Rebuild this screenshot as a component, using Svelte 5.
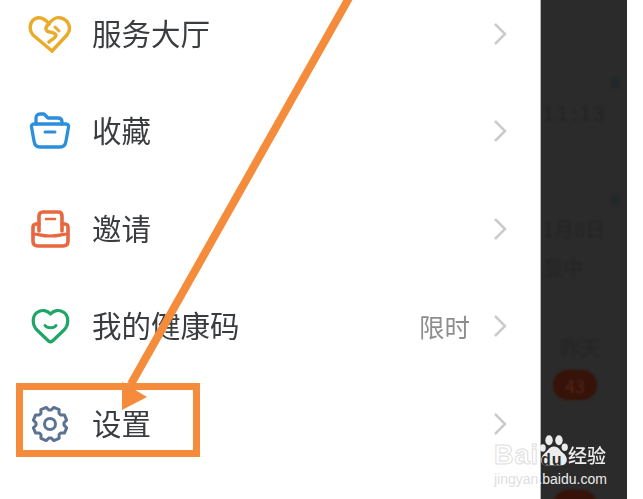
<script>
  const rows = [
    { label: "服务大厅", icon: "heart" },
    { label: "收藏", icon: "folder" },
    { label: "邀请", icon: "inbox" },
    { label: "我的健康码", icon: "health", note: "限时" },
    { label: "设置", icon: "gear" },
  ];

  // 8 teeth, outer and inner radius alternate
  function gearPath() {
    const pts = [];
    for (let i = 0; i < 8; i++) {
      const a = (i * Math.PI) / 4 + Math.PI / 8;
      const spread = [-0.17, 0.17, 0.31, 0.47];
      pts.push([a + spread[0], 17], [a + spread[1], 17], [a + spread[2], 14], [a + spread[3], 14]);
    }
    const xy = pts.map(([t, r]) => `${(22 + r * Math.cos(t)).toFixed(1)} ${(22 + r * Math.sin(t)).toFixed(1)}`);
    return "M" + xy.join(" L") + " Z";
  }
  const gear = gearPath();
</script>

<div class="page">
  <div class="drawer">
    <ul class="menu">
      {#each rows as row}
        <li class="row">
          <svg class="icon" viewBox="0 0 44 44" fill="none" stroke-linecap="round" stroke-linejoin="round">
            {#if row.icon === "heart"}
              <path d="M24 39 L5 23 C0 17 2 8 9 6 C14 5 18 8 21 12 C18 14 17 17 19 19 C22 21 27 20 28 23 C28 26 24 27 21 30" stroke="#eaaa2a" stroke-width="3.400" />
              <path d="M21 12 C24 7 29 5 33 6 C41 8 44 17 39 23 L24 39" stroke="#eaaa2a" stroke-width="3.400" />
              <path d="M27 15 L31 19" stroke="#eaaa2a" stroke-width="3" />
            {:else if row.icon === "folder"}
              <path d="M8 15 V9 C8 6.500 9.500 5 12 5 H16 L20 9 H30 C32.500 9 34 10.500 34 13 V15" stroke="#2b8fdc" stroke-width="3.300" />
              <path d="M6 15 H38 C40 15 41 16.500 40.500 18 L38 32 C37.500 36 35.500 38 32 38 H12 C8.500 38 6.500 36 6 32 L3.500 18 C3 16.500 4 15 6 15 Z" stroke="#2b8fdc" stroke-width="3.300" />
              <path d="M17 23 H27" stroke="#2b8fdc" stroke-width="3" />
            {:else if row.icon === "inbox"}
              <path d="M11 24 V9 C11 6.500 12.500 5 15 5 H30 C32.500 5 34 6.500 34 9 V24" stroke="#e8673f" stroke-width="3.600" />
              <path d="M11 17 H8 C6 17 5 18.500 5 20 V34 C5 37.500 7 39 10 39 H35 C38 39 40 37.500 40 34 V20 C40 18.500 39 17 37 17 H34" stroke="#e8673f" stroke-width="3.600" />
              <path d="M5 27 C12 27 12 29 22 29 C33 29 33 27 40 27" stroke="#e8673f" stroke-width="3.200" />
              <path d="M18 12 H27" stroke="#e8673f" stroke-width="2.600" />
            {:else if row.icon === "health"}
              <path d="M20.500 37 L9 26 C4 21 4 12 9 8.500 C14 5 19.500 6.500 22.500 10 C25.500 6.500 31 5 36 8.500 C41 12 41 21 36 26 L24.500 37 C23 38.300 22 38.300 20.500 37 Z" stroke="#1fa566" stroke-width="3.200" />
              <path d="M17 21.500 C19 24.500 26 24.500 28 21.500" stroke="#1fa566" stroke-width="3" />
            {:else}
              <path d={gear} stroke="#5c7291" stroke-width="3" />
              <circle cx="22" cy="22" r="5.500" stroke="#5c7291" stroke-width="3" />
            {/if}
          </svg>
          <span class="label">{row.label}</span>
          {#if row.note}
            <span class="note">{row.note}</span>
          {/if}
          <svg class="chevron" viewBox="0 0 14 24" fill="none">
            <path d="M2 2 L12 12 L2 22" stroke="#cbcbcb" stroke-width="2.500" />
          </svg>
        </li>
      {/each}
    </ul>
  </div>

  <div class="backdrop">
    <span class="pin pin-a"></span>
    <span class="pin pin-b"></span>
    <div class="blurred time">11:13</div>
    <div class="blurred date">1月8日</div>
    <div class="blurred sub">显中</div>
    <div class="blurred yesterday">昨天</div>
    <div class="badge">43</div>
    <div class="badge second"></div>
  </div>

  <div class="margin"></div>

  <!-- arrow and box drawn over the screenshot -->
  <svg class="arrow" viewBox="0 0 643 499" fill="none">
    <path d="M349 -2 L131 384" stroke="#f58c3c" stroke-width="8" />
    <path d="M122 382 L147 397 L122 410 Z" fill="#f58c3c" />
  </svg>
  <div class="callout"></div>

  <div class="mark">
    <div class="mark-top">
      <span class="bai">Bai</span>
      <svg class="paw" viewBox="0 0 34 38" fill="#ececec">
        <ellipse cx="11" cy="6.500" rx="4.500" ry="6" />
        <ellipse cx="23" cy="6.500" rx="4.500" ry="6" />
        <ellipse cx="30" cy="15" rx="3.800" ry="4.500" />
        <ellipse cx="3.500" cy="16" rx="3.500" ry="4.500" />
        <path d="M17 14 C23 14 24 19 28 22 C35 27 34 37 25 37 H8 C0 37 -1 28 6 22 C10 19 11 14 17 14 Z" />
      </svg>
      <span class="du">du</span>
      <span class="jy">经验</span>
    </div>
    <div class="mark-url"><span class="faint">jingyan</span>.baidu.com</div>
  </div>
</div>

<style>
  :global(body) {
    margin: 0;
    background: #fff;
  }

  .page {
    position: relative;
    display: flex;
    width: 643px;
    height: 499px;
    overflow: hidden;
    font-family: "Noto Sans CJK SC", "Liberation Sans", sans-serif;
  }

  .drawer {
    width: 540px;
    flex: none;
    background: #fff;
    border-right: 1px solid #b5b5b5;
  }

  .menu {
    list-style: none;
    margin: -15px 0 0;
    padding: 0;
  }

  .row {
    display: flex;
    align-items: center;
    height: 97.5px;
    padding-left: 28px;
    padding-right: 33px;
  }

  .icon {
    width: 44px;
    height: 44px;
    flex: none;
    margin-right: 20px;
    filter: blur(0.6px);
  }

  .label {
    font-size: 29.5px;
    color: #3a3d40;
    flex: 1;
    margin-bottom: 4px;
    filter: blur(0.5px);
  }

  .note {
    font-size: 25.5px;
    color: #8e8e8e;
    margin-right: 23px;
    margin-bottom: 2px;
    filter: blur(0.5px);
  }

  .chevron {
    width: 14px;
    height: 24px;
    flex: none;
    filter: blur(0.6px);
  }

  .backdrop {
    position: relative;
    width: 86px;
    flex: none;
    background: #2b2b2b;
    display: flex;
    flex-direction: column;
    align-items: flex-start;
    overflow: hidden;
  }

  .pin {
    position: absolute;
    left: 70px;
    width: 9px;
    height: 10px;
    background: #22282a;
    filter: blur(1.5px);
  }

  .pin-a {
    top: 78px;
  }

  .pin-b {
    top: 195px;
  }

  .blurred {
    color: #242424;
    font-size: 20px;
    line-height: 24px;
    filter: blur(1.3px);
    white-space: nowrap;
  }

  .time {
    margin-top: 101px;
    margin-left: 2px;
    letter-spacing: 3px;
  }

  .date {
    margin-top: 92px;
    margin-left: 2px;
  }

  .sub {
    margin-top: 15px;
    margin-left: 2px;
  }

  .yesterday {
    margin-top: 56px;
    margin-left: 19px;
  }

  .badge {
    margin-top: 10px;
    margin-left: 12px;
    width: 44px;
    height: 30px;
    line-height: 30px;
    text-align: center;
    border-radius: 15px;
    background: #361208;
    color: #552618;
    font-size: 18px;
    filter: blur(1px);
    flex: none;
  }

  .badge.second {
    margin-top: 90px;
  }

  .margin {
    flex: 1;
    background: #fff;
  }

  .arrow {
    position: absolute;
    inset: 0;
    width: 643px;
    height: 499px;
  }

  .callout {
    position: absolute;
    left: 16px;
    top: 383px;
    width: 170px;
    height: 60px;
    border: 7px solid #f58c3c;
  }

  .mark {
    position: absolute;
    left: 494px;
    top: 432px;
    width: 118px;
    color: #ececec;
    font-family: "Liberation Sans", "Noto Sans CJK SC", sans-serif;
  }

  .mark-top {
    position: relative;
    display: flex;
    align-items: flex-end;
    height: 38px;
  }

  .bai {
    font-size: 27px;
    line-height: 30px;
    color: #fff;
    -webkit-text-stroke: 1px #dedede;
    font-weight: 700;
    letter-spacing: 1px;
    width: 46px;
    flex: none;
  }

  .paw {
    width: 28px;
    height: 35px;
    flex: none;
    margin-bottom: 2px;
  }

  .du {
    position: absolute;
    left: 47px;
    top: 20px;
    font-size: 16px;
    font-weight: 700;
    letter-spacing: 1px;
    line-height: 15px;
    color: #2b2b2b;
  }

  .jy {
    font-family: "Noto Sans CJK SC", sans-serif;
    font-size: 19px;
    font-weight: 500;
    line-height: 25px;
    margin-bottom: 3px;
    white-space: nowrap;
    filter: blur(0.3px);
  }

  .mark-url {
    font-size: 14px;
    line-height: 16px;
    white-space: nowrap;
    margin-top: 1px;
  }

  .faint {
    color: #e0e0e0;
  }
</style>
